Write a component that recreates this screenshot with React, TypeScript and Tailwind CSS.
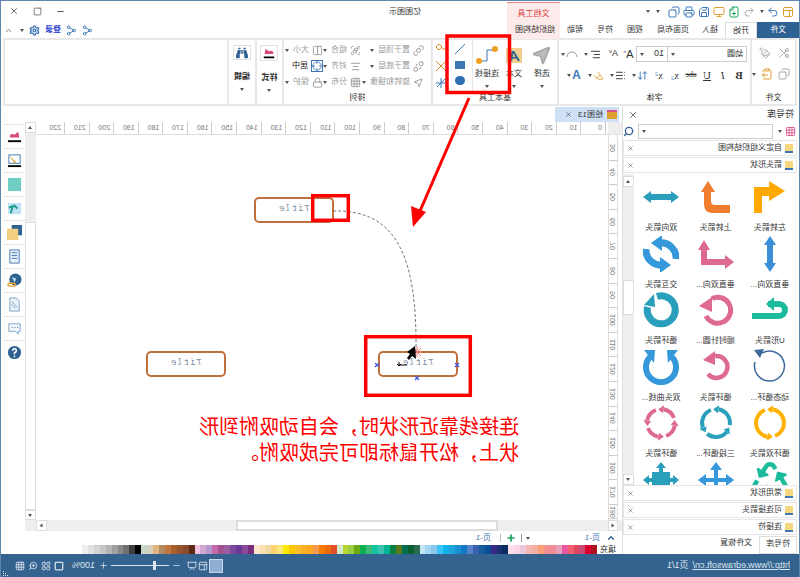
import {
  BringToFront, ChevronUp, ClipboardPaste, Columns2, Copy, Crosshair, FilePlus, Grid3x3, Group as GroupIcon, Layout, LayoutGrid, List, Lock, Minus,
  Monitor, MousePointer2, Paintbrush, Plus, Presentation, Printer, Redo2, Save, Scissors, Search, SendToBack, Settings, Share2, Square, Undo2, X, ZoomIn,
  AlignCenter, AlignLeft, ArrowUpDown, Highlighter,
} from "lucide-react";
import { FaBinoculars, FaRecycle } from "react-icons/fa";

const tabs = [
  { name: "插入", w: "w-[30px]" },
  { name: "页面布局", w: "w-[44px]" },
  { name: "视图", w: "w-[32px]" },
  { name: "符号", w: "w-[28px]" },
  { name: "帮助", w: "w-[32px]" },
  { name: "组织结构图", w: "w-[48px]" },
];

const palette = [
  "#eeeeee", "#e2e2e2", "#d4d4d4", "#c6c6c6", "#b4b4b4", "#a0a0a0", "#888888", "#707070", "#3f3f3f", "#000000",
  "#c9d6c9", "#d6cfc0", "#e0b47c", "#b58a60", "#c2763f", "#a9602f", "#96532c", "#8a4a2b", "#5c2a14",
  "#eec4df", "#d0a8d0", "#b49ad0", "#c56aa8", "#a2528e", "#9a5ea0", "#7c4a9a", "#6a3a9a", "#8a4a9a", "#7b2c7c",
  "#fde9cf", "#fddfb0", "#f0d6a0", "#fdd270", "#fde87a", "#fde800", "#fdc800", "#fdbe28", "#fbb028", "#fca81e", "#f99a50", "#f77c00", "#ec6a10", "#e2502a",
  "#cfe8c8", "#b8d430", "#9ccc44", "#6aaa14", "#0cb050", "#3abb7a", "#10c4a0", "#3cc0b0", "#00b294", "#0a8040", "#5a7a20", "#00704e", "#0a6030", "#2a6a50",
  "#c4e6f4", "#a2d8f4", "#8cc8ec", "#3cc4f8", "#10b4f0", "#1ca4d8", "#1890d0", "#1478c8", "#5a82c8", "#3c60b0", "#145c9c", "#0a4c98", "#3a2a88", "#1c3070", "#0c2c60",
  "#fde0e8", "#fcd4e8", "#ecc8e0", "#f4b8b0", "#f4b0a0", "#fca078", "#f49090", "#f08c98", "#e8a0b8", "#e858a0", "#ee6070", "#e04860", "#cc4878", "#d8002c", "#b01020",
];

// ring made of n arrow segments
const RingArrows = ({ n, color, r, sw }: { n: number; color: string; r: number; sw: number }) => {
  const gap = 0.55;
  const items = Array.from({ length: n }, (_, i) => {
    const a0 = (i * 2 * Math.PI) / n - 1.2;
    const a1 = a0 + (2 * Math.PI) / n - gap;
    const p = (a: number, rr: number) => `${(18 + rr * Math.cos(a)).toFixed(1)} ${(18 + rr * Math.sin(a)).toFixed(1)}`;
    return (
      <g key={i}>
        <path d={`M${p(a0, r)} A${r} ${r} 0 0 1 ${p(a1, r)}`} fill="none" stroke={color} strokeWidth={sw} />
        <polygon points={`${p(a1, r + sw)} ${p(a1, r - sw)} ${p(a1 + gap * 0.7, r)}`} fill={color} />
      </g>
    );
  });
  return <svg viewBox="0 0 36 36" className="w-9 h-9">{items}</svg>;
};

const Shape = ({ children, color }: { children: React.ReactNode; color: string }) => (
  <svg viewBox="0 0 36 36" className="w-9 h-9 -scale-x-100" fill={color}>{children}</svg>
);

const shapes = [
  { label: "左转箭头", icon: <Shape color="#ffa800"><polygon points="2,34 10,34 10,17 17,17 17,22 33,12 17,2 17,8 2,8" /></Shape> },
  { label: "上转箭头", icon: <Shape color="#f07c2e"><path d="M10 2 L17 13 H13 V22 Q13 26 17 26 H32 V34 H15 Q6 34 6 25 V13 H3 Z" /></Shape> },
  { label: "双向箭头", icon: <Shape color="#2a9fbc"><path d="M0 18 L8 12 V15 H28 V12 L36 18 L28 24 V21 H8 V24 Z" /></Shape> },
  { label: "垂直双向...", icon: <Shape color="#3a8fd6"><path d="M18 0 L24 9 H21 V27 H24 L18 36 L12 27 H15 V9 H12 Z" /></Shape> },
  { label: "垂直双向...", icon: <Shape color="#de6a8f"><path d="M6 4 L12 14 H9 V23 H27 V19 L36 26 L27 33 V29 H3 V14 H0 Z" /></Shape> },
  { label: "交互箭头", icon: <Shape color="#3498db"><path d="M33 23 A15 15 0 0 0 16 7" fill="none" stroke="#3498db" strokeWidth="7" /><polygon points="8,7 19,-1 19,15" /><path d="M3 13 A15 15 0 0 0 20 29" fill="none" stroke="#3498db" strokeWidth="7" /><polygon points="28,29 17,37 17,21" /></Shape> },
  { label: "U形箭头", icon: <Shape color="#1abc9c"><path d="M16 12 H27 A6 6 0 0 1 27 24 H0" fill="none" stroke="#1abc9c" strokeWidth="6" /><polygon points="14,12 22,5 22,19" /></Shape> },
  { label: "顺时针圆...", icon: <Shape color="#de6a8f"><path d="M14 6.5 A13 13 0 1 1 8 24" fill="none" stroke="#de6a8f" strokeWidth="5" /><polygon points="1,14 14,5 14,20" /></Shape> },
  { label: "循环箭头", icon: <Shape color="#2a9fbc"><path d="M14 4.5 A14 14 0 1 1 4.5 15" fill="none" stroke="#2a9fbc" strokeWidth="7" /><polygon points="1,13 11,2 12,15" /></Shape> },
  { label: "动态循环...", icon: <Shape color="#3e6a9a"><path d="M10 4 A15 15 0 1 1 3 13" fill="none" stroke="#3e6a9a" strokeWidth="1.5" /><polygon points="2,1 12,0 8,9" /></Shape> },
  { label: "循环箭头", icon: <Shape color="#de6a8f"><path d="M17 7 A11 11 0 1 1 10 25" fill="none" stroke="#de6a8f" strokeWidth="4.5" /><polygon points="5,11 17,2 17,16" /></Shape> },
  { label: "双头曲线...", icon: <Shape color="#3498db"><path d="M7 8 A15 15 0 1 0 29 8" fill="none" stroke="#3498db" strokeWidth="6" /><polygon points="1,1 12,1 11,14" /><polygon points="35,1 24,1 25,14" /></Shape> },
  { label: "循环双箭头", icon: <RingArrows n={2} color="#ffb000" r={14} sw={4} /> },
  { label: "三段循环...", icon: <RingArrows n={3} color="#2a9fbc" r={14} sw={4} /> },
  { label: "循环箭头", icon: <RingArrows n={4} color="#de6a8f" r={14} sw={4} /> },
  { label: "", icon: <FaRecycle className="w-9 h-9 text-[#1abc9c]" /> },
  { label: "", icon: <Shape color="#3498db"><path d="M18 0 L24 8 H20 V16 H28 V12 L36 18 L28 24 V20 H20 V28 H24 L18 36 L12 28 H16 V20 H8 V24 L0 18 L8 12 V16 H16 V8 H12 Z" /></Shape> },
  { label: "", icon: <Shape color="#2a9fbc"><path d="M18 0 L23 6 H20 V10 H27 V16 H30 V13 L36 18 L30 23 V20 H27 V36 H9 V20 H6 V23 L0 18 L6 13 V16 H9 V10 H16 V6 H13 Z" /></Shape> },
];

// small folder-ish marker on the stencil headers
const SectionHead = ({ title }: { title: string }) => (
  <div className="h-[16px] shrink-0 mb-px ml-[2px] flex items-center border border-[#e6e6e6] bg-white pl-[3px] pr-[3px] text-[8px] text-[#333]">
    <span className="w-[8px] h-[9px] mr-[3px] bg-[#f5d77f] border-b-2 border-[#3f77b5]" />
    <span className="flex-1 whitespace-nowrap">{title}</span>
    <X size={7} className="text-[#555]" />
  </div>
);

const Caret = ({ className = "" }: { className?: string }) => (
  <span className={`inline-block w-0 h-0 border-x-[2px] border-x-transparent border-t-[3px] border-t-[#555] ${className}`} />
);

const ArrangeItem = ({ icon, label, active }: { icon: React.ReactNode; label: string; active?: boolean }) => (
  <div className={`h-[16px] flex items-center gap-[3px] text-[8px] whitespace-nowrap ${active ? "text-[#222]" : "text-[#999]"}`}>
    <span className="w-[12px] flex justify-center">{icon}</span>
    {label}
    {!active && <Caret className="ml-[1px]" />}
  </div>
);

// big tool button of the basic tools group
const BigBtn = ({ icon, label, w }: { icon: React.ReactNode; label: string; w: string }) => (
  <div className={`${w} flex flex-col items-center text-[8px] text-[#333] pt-[3px]`}>
    <div className="h-[24px] flex items-center justify-center">{icon}</div>
    <span className="leading-[13px] whitespace-nowrap">{label}</span>
    <Caret className="mt-[5px]" />
  </div>
);

const BoxedBtn = ({ icon, label }: { icon: React.ReactNode; label: string }) => (
  <div className="w-full flex flex-col items-center text-[8px] font-bold text-[#333] pt-[5px]">
    <div className="w-[18px] h-[18px] border border-[#e0e0e0] flex items-center justify-center">{icon}</div>
    <span className="mt-[10px] leading-[13px]">{label}</span>
    <Caret className="mt-[5px]" />
  </div>
);

const Group = ({ w, label, children }: { w: string; label?: string; children: React.ReactNode }) => (
  <div className={`${w} shrink-0 flex flex-col border-r-2 border-[#e8e8e8]`}>
    <div className="flex-1 flex min-h-0">{children}</div>
    <div className="h-[13px] text-center text-[8px] leading-[13px] text-[#333]">{label}</div>
  </div>
);

const rulerH = Array.from({ length: 23 }, (_, i) => i * 10);
const rulerV = Array.from({ length: 16 }, (_, i) => 30 + i * 10);

const ToolIcon = ({ children }: { children: React.ReactNode }) => (
  <div className="h-[24px] border-t border-[#e4e4e4] flex items-center justify-center">
    <svg viewBox="0 0 16 16" className="w-[15px] h-[15px] -scale-x-100">{children}</svg>
  </div>
);

const titleBox = "absolute w-[80px] h-[26px] rounded-[5px] border-2 border-[#c0703c] flex items-center justify-center italic text-[9px] tracking-[1px] text-[#8090a0] font-['Liberation_Mono',monospace]";

export default function App() {
  return (
    <div className="relative w-[800px] h-[577px] overflow-hidden -scale-x-100 bg-white flex flex-col border-x border-t border-[#5f86ad] font-['Liberation_Sans','Noto_Sans_CJK_SC',sans-serif]">
      {/* contextual tab */}
      <div className="absolute left-[239px] top-[1px] w-[53px] h-[37px] bg-[#fdeaea] border-t border-[#f08a8a] text-center text-[8px] leading-[22px] text-[#d9413c]">文档工具</div>

      {/* title bar */}
      <div className="relative h-[21px] shrink-0 flex items-center text-[#3f77b5] pl-[5px]">
        <div className="flex items-center gap-[3px]">
          <Layout size={12} className="text-[#e0a030]" />
          <Redo2 size={12} />
          <Caret />
          <Undo2 size={12} className="ml-[2px] text-[#aaa]" />
          <FilePlus size={12} className="text-[#1aa35a]" />
          <Monitor size={12} className="text-[#e0a030]" />
          <Save size={12} />
          <Printer size={12} />
          <Copy size={12} />
          <Caret className="ml-[5px]" />
          <Caret className="ml-[3px]" />
        </div>
        <span className="absolute left-[378px] text-[8px] text-[#333]">亿图图示</span>
        <div className="absolute left-[734px] top-[5px] flex items-center gap-[14px] text-[#555]">
          <Minus size={9} strokeWidth={3} />
          <Square size={9} />
          <X size={10} />
        </div>
      </div>

      {/* tabs */}
      <div className="relative h-[16px] shrink-0 flex items-stretch text-[8px] text-[#333] leading-[15px] text-center">
        <div className="w-[42px] bg-[#2e6292] text-white">文件</div>
        <div className="w-[32px] border-x border-t border-[#dcdcdc] bg-white">开始</div>
        {tabs.map((t) => (
          <div key={t.name} className={`${t.w} whitespace-nowrap`}>{t.name}</div>
        ))}
        <div className="absolute left-[706px] top-0 h-[16px] flex items-center gap-[5px] text-[#3f77b5]">
          <Share2 size={11} />
          <Share2 size={11} />
          <span className="text-[8px] leading-[12px] font-bold text-[#2b3fd6] whitespace-nowrap">登录</span>
          <Settings size={11} strokeWidth={3} />
          <Caret />
          <ChevronUp size={9} className="ml-[2px] text-[#555]" />
        </div>
      </div>

      {/* ribbon */}
      <div className="h-[68px] shrink-0 mx-[2px] flex border-2 border-[#e8e8e8] bg-white">
        <Group w="w-[45px]" label="文件">
          <div className="flex flex-col gap-[9px] pl-[5px] pt-[7px] text-[#aaa]">
            <div className="flex gap-[7px]"><Scissors size={12} /><Paintbrush size={12} /></div>
            <div className="flex gap-[5px] items-center"><Copy size={12} /><ClipboardPaste size={12} className="text-[#e0a030]" /><Caret /></div>
          </div>
        </Group>
        <Group w="w-[193px]" label="字体">
          <div className="flex flex-col gap-[5px] pl-[3px] pt-[6px] text-[8px] text-[#333]">
            <div className="flex items-center h-[16px]">
              <div className="w-[80px] h-[16px] border border-[#ccc] px-[3px] flex items-center justify-between">幼圆<Caret /></div>
              <div className="w-[31px] h-[16px] border-y border-r border-[#ccc] px-[3px] flex items-center justify-between text-[9px]">10<Caret /></div>
              <span className="w-[15px] text-center text-[11px]">A<sup className="text-[6px]">^</sup></span>
              <span className="w-[15px] text-center text-[9px]">A<sup className="text-[6px]">v</sup></span>
              <span className="w-[26px] flex items-center justify-center gap-[2px]"><AlignLeft size={11} /><Caret /></span>
              <span className="w-[20px] flex items-center justify-center gap-[1px]">
                <svg viewBox="0 0 12 12" className="w-[12px] h-[12px]"><path d="M1 9 A5 5 0 0 1 11 9" fill="none" stroke="#999" /></svg>
                <Caret />
              </span>
            </div>
            <div className="flex items-center h-[16px] font-['Liberation_Serif','Noto_Sans_CJK_SC',serif]">
              <span className="w-[16px] text-center font-bold text-[11px]">B</span>
              <span className="w-[16px] text-center italic text-[11px]">I</span>
              <span className="w-[16px] text-center underline text-[11px]">U</span>
              <span className="w-[16px] text-center line-through text-[8px]">abc</span>
              <span className="w-[16px] text-center text-[10px]">x<sub className="text-[6px] text-[#3f77b5]">2</sub></span>
              <span className="w-[16px] text-center text-[10px]">x<sup className="text-[6px] text-[#3f77b5]">2</sup></span>
              <span className="w-[22px] flex items-center justify-center gap-[1px]"><ArrowUpDown size={11} className="text-[#3f77b5]" /><Caret /></span>
              <span className="w-[22px] flex items-center justify-center gap-[1px]"><List size={11} /><Caret /></span>
              <span className="w-[22px] flex items-center justify-center gap-[1px]"><Highlighter size={11} className="text-[#e0a030]" /><Caret /></span>
              <span className="w-[22px] flex items-center justify-center gap-[1px] text-[12px] font-bold text-[#3f77b5] font-['Liberation_Sans']">A<Caret /></span>
            </div>
          </div>
        </Group>
        <Group w="w-[126px]" label="基本工具">
          <BigBtn w="w-[30px]" label="选择" icon={<MousePointer2 size={22} className="text-[#aaa] fill-[#bbb]" />} />
          <BigBtn w="w-[26px]" label="文本" icon={
            <div className="w-[16px] h-[15px] bg-[#f2cf8e] text-[#2e6292] font-bold text-[15px] leading-[15px] text-center italic">A</div>
          } />
          <div className="border-r border-[#e8e8e8]">
            <BigBtn w="w-[28px]" label="连接线" icon={
              <svg viewBox="0 0 24 22" className="w-[24px] h-[22px]"><path d="M5 6 H12 V17 H19" fill="none" stroke="#3f77b5" /><circle cx="4" cy="5" r="3" fill="#f0a020" /><circle cx="20" cy="17" r="3" fill="#f0a020" /></svg>
            } />
          </div>
          <div className="flex flex-col items-center w-[24px] gap-[5px] pt-[3px]">
            <svg viewBox="0 0 12 12" className="w-[12px] h-[12px]"><path d="M1 1 L11 11" stroke="#3f77b5" /></svg>
            <div className="w-[10px] h-[8px] mt-[1px] bg-[#3f77b5]" />
            <div className="w-[10px] h-[9px] mt-[2px] rounded-full bg-[#2f6fb0]" />
          </div>
          <div className="flex flex-col items-center w-[14px] gap-[5px] pt-[3px]">
            <svg viewBox="0 0 12 12" className="w-[12px] h-[12px]"><path d="M1 6 H5 M8 1 L11 4 L8 7 L5 4 Z" fill="none" stroke="#e08a20" /></svg>
            <svg viewBox="0 0 12 12" className="w-[12px] h-[12px]"><path d="M1 1 L11 11 M11 1 L1 11" fill="none" stroke="#e08a20" /></svg>
            <svg viewBox="0 0 12 12" className="w-[12px] h-[12px]"><path d="M6 1 V11 M1 6 H11 M2 2 L10 10" fill="none" stroke="#3f77b5" /></svg>
          </div>
        </Group>
        <Group w="w-[149px]" label="排列">
          <div className="flex pl-[6px] pt-[2px]">
            <div className="w-[63px] flex flex-col">
              <ArrangeItem icon={<BringToFront size={11} />} label="置于顶层" />
              <ArrangeItem icon={<SendToBack size={11} />} label="置于底层" />
              <ArrangeItem icon={<MousePointer2 size={11} />} label="旋转和镜像" />
            </div>
            <div className="w-[39px] flex flex-col">
              <ArrangeItem icon={<GroupIcon size={11} />} label="组合" />
              <ArrangeItem icon={<AlignCenter size={11} />} label="对齐" />
              <ArrangeItem icon={<Grid3x3 size={11} />} label="分布" />
            </div>
            <div className="w-[36px] flex flex-col">
              <ArrangeItem icon={<Columns2 size={11} />} label="大小" />
              <ArrangeItem active icon={<span className="border border-[#3f77b5] flex"><Crosshair size={10} className="text-[#3f77b5]" /></span>} label="居中" />
              <ArrangeItem icon={<Lock size={11} />} label="保护" />
            </div>
          </div>
        </Group>
        <Group w="w-[27px]">
          <BoxedBtn label="样式" icon={
            <svg viewBox="0 0 16 16" className="w-[14px] h-[14px]"><path d="M3 9 Q3 4 8 6 L12 3 L13 9 Z" fill="#d94a7a" /><rect x="2" y="12" width="12" height="2" /></svg>
          } />
        </Group>
        <Group w="w-[28px]">
          <BoxedBtn label="编辑" icon={<FaBinoculars size={12} className="text-[#2e6292]" />} />
        </Group>
      </div>

      {/* main */}
      <div className="flex-1 min-h-0 flex">
        {/* stencil panel */}
        <div className="w-[177px] shrink-0 flex flex-col border-r border-[#e0e0e0]">
          <div className="h-[17px] shrink-0 flex items-center justify-between pl-[5px] pr-[3px] text-[9px] text-[#333]">
            符号库
            <X size={10} className="mr-[2px] text-[#555]" />
          </div>
          <div className="h-[17px] shrink-0 flex items-center pl-[3px]">
            <Grid3x3 size={11} className="text-[#d9518a]" />
            <Caret className="ml-[3px]" />
            <div className="ml-[5px] w-[137px] h-[15px] border border-[#ccc] flex items-center justify-end pr-[3px]"><Caret /></div>
            <Search size={11} className="ml-[4px] text-[#2e6292]" strokeWidth={3} />
          </div>
          <SectionHead title="自定义组织结构图" />
          <SectionHead title="箭头形状" />
          <div className="h-[311px] shrink-0 flex overflow-hidden">
            <div className="w-[165px] grid grid-cols-3 pl-[2px] auto-rows-[56.5px]">
              {shapes.map((s, i) => (
                <div key={i} className="flex flex-col items-center pt-[5px]">
                  <div className="h-[36px] flex items-center">{s.icon}</div>
                  <span className="mt-[7px] text-[8px] leading-[12px] text-[#333] whitespace-nowrap">{s.label}</span>
                </div>
              ))}
            </div>
            <div className="w-[11px] flex flex-col bg-[#eeeeee]">
              <div className="h-[11px] mt-[2px] bg-white border border-[#ddd] flex items-center justify-center"><Caret className="rotate-180" /></div>
              <div className="h-[93px]" />
              <div className="h-[35px] bg-white border border-[#ddd]" />
              <div className="flex-1" />
              <div className="h-[11px] bg-white border border-[#ddd] flex items-center justify-center"><Caret /></div>
            </div>
          </div>
          <SectionHead title="常用形状" />
          <SectionHead title="可连接箭头" />
          <SectionHead title="连接符" />
          <div className="flex-1 flex pl-[2px] text-[8px] text-[#333] text-center leading-[14px] whitespace-nowrap">
            <div className="w-[38px] border border-[#ddd] bg-white">符号库</div>
            <div className="ml-[4px] w-[38px]">文件恢复</div>
          </div>
        </div>

        {/* document area */}
        <div className="flex-1 min-w-0 flex flex-col">
          <div className="h-[16px] shrink-0 flex items-end">
            <div className="ml-[3px] w-[64px] h-[15px] bg-[#cfe0f5] flex items-center justify-between pl-[2px] pr-[10px] text-[8px] text-[#333]">
              <span className="flex items-center gap-[4px]"><span className="w-[10px] h-[9px] bg-[#e0a030] border-t-2 border-[#d9518a]" />绘图13</span>
              <X size={7} />
            </div>
          </div>
          <div className="flex-1 min-h-0 grid grid-cols-[14px_1fr_11px] grid-rows-[13px_1fr_11px]">
            <div className="bg-[#eeeeee] border-b border-[#e0e0e0]" />
            <div className="relative overflow-hidden flex bg-white border-b border-[#ddd] pl-[2px] text-[7px] leading-[11px] text-[#777]">
              {rulerH.map((n) => (
                <div key={n} className="w-[24.6px] shrink-0 border-l border-[#ccc] pl-[3px]">{n}</div>
              ))}
            </div>
            <div className="row-span-2 flex flex-col bg-[#eeeeee]">
              <div className="h-[11px] bg-white border border-[#ddd] flex items-center justify-center"><Caret className="rotate-180" /></div>
              <div className="h-[89px]" />
              <div className="flex-1 bg-white border border-[#ddd]" />
              <div className="h-[10px] bg-white border border-[#ddd] flex items-center justify-center"><Caret /></div>
            </div>
            <div className="overflow-hidden ml-[4px] w-[10px] border-x border-[#ddd] flex flex-col pt-[1px] text-[7px] text-[#777]">
              {rulerV.map((n) => (
                <div key={n} className="h-[24.6px] last:h-[14px] shrink-0 border-b border-[#ccc] flex items-center justify-center [writing-mode:vertical-rl]">{n}</div>
              ))}
            </div>
            <div className="relative bg-white overflow-hidden">
              <div className={`${titleBox} left-[274px] top-[62px]`}>Title</div>
              <div className={`${titleBox} left-[382px] top-[216px]`}>Title</div>
              <div className={`${titleBox} left-[150px] top-[216px]`}>Title</div>
              <div className="absolute left-[89px] top-[279px] text-[20px] leading-[26px] text-[#ff0000] whitespace-nowrap">
                连接线靠近形状时，会自动吸附到形<br />状上，松开鼠标即可完成吸附。
              </div>
            </div>
            <div className="col-span-3 bg-[#eeeeee] flex pl-[4px]">
              <div className="w-[10px] bg-white border border-[#ddd] flex items-center justify-center"><Caret className="rotate-90" /></div>
              <div className="ml-[110px] w-[262px] bg-white border-2 border-[#ddd]" />
              <div className="ml-[189px] w-[11px] bg-white border border-[#ddd] flex items-center justify-center"><Caret className="-rotate-90" /></div>
            </div>
          </div>
          <div className="h-[14px] shrink-0 flex items-center text-[8px]">
            <ChevronUp size={10} className="ml-[6px] text-[#2e6292]" strokeWidth={3} />
            <span className="ml-[6px] w-[14px] text-[#3f77b5] whitespace-nowrap">页-1</span>
            <Caret className="ml-[56px]" />
            <span className="ml-[4px] w-px h-[8px] bg-[#999]" />
            <Plus size={10} strokeWidth={4} className="ml-[5px] text-[#1aa35a]" />
            <span className="ml-[5px] w-px h-[8px] bg-[#bbb]" />
            <span className="ml-[9px] w-[14px] text-[#3f77b5] whitespace-nowrap">页-1</span>
          </div>
          <div className="h-[9px] shrink-0 flex items-center">
            <span className="w-[22px] text-[8px] leading-[9px] text-right text-[#333] whitespace-nowrap">填充</span>
            <div className="w-[518px] h-[9px] flex flex-row-reverse">
              {palette.map((c, i) => (
                <div key={i} className="w-[5.93px] h-[9px] shrink-0" style={{ backgroundColor: c }} />
              ))}
            </div>
          </div>
        </div>

        {/* side toolbar */}
        <div className="w-[24px] shrink-0 flex flex-col pt-[18px] pr-[3px]">
          <ToolIcon><path d="M3 9 Q3 4 8 6 L12 3 L13 9 Z" fill="#d94a7a" /><rect x="1" y="12" width="14" height="2" /></ToolIcon>
          <ToolIcon><rect x="2" y="2" width="12" height="9" fill="none" stroke="#3f77b5" /><path d="M2 2 L10 10 L8 11 Z" fill="#e0a030" /><rect x="1" y="13" width="14" height="2" /></ToolIcon>
          <ToolIcon><rect x="1" y="1" width="14" height="14" fill="#6fcdc4" /></ToolIcon>
          <ToolIcon><rect x="1" y="2" width="14" height="12" fill="#bfe3f5" /><path d="M4 13 L6 6 M2 7 L8 5 L11 8" stroke="#1a9c8a" strokeWidth="2" fill="none" /></ToolIcon>
          <ToolIcon><rect x="5" y="0" width="11" height="11" fill="#2e6292" /><rect x="0" y="4" width="12" height="12" fill="#f2cf7e" /></ToolIcon>
          <ToolIcon><path d="M3 1 H13 V15 H3 Z" fill="#e8f0f8" stroke="#3f77b5" /><path d="M5 4 H11 M5 7 H11 M5 10 H11" stroke="#3f77b5" /></ToolIcon>
          <ToolIcon><circle cx="9" cy="7" r="6.5" fill="#2e6292" /><path d="M5 4 L10 6 L8 10 Z" fill="#bcd6ee" /><rect x="1" y="11" width="8" height="3" rx="1.5" fill="none" stroke="#e0a030" strokeWidth="1.5" /></ToolIcon>
          <ToolIcon><path d="M3 1 H10 L13 4 V15 H3 Z" fill="#e8f0f8" stroke="#7ba3c9" /><path d="M5 5 L11 11 M5 8 L9 12" stroke="#7ba3c9" /></ToolIcon>
          <ToolIcon><path d="M2 3 H14 V11 H12 V14 L9 11 H2 Z" fill="#f4f8fc" stroke="#7ba3c9" /><path d="M5 7 H6 M8 7 H9 M11 7 H12" stroke="#2e6292" /></ToolIcon>
          <ToolIcon><circle cx="8" cy="8" r="7" fill="#2e6292" /><path d="M6 6 Q6 4 8 4 Q10 4 10 6 Q10 7.5 8 8 V10 M8 11.5 V13" stroke="#fff" strokeWidth="1.6" fill="none" /></ToolIcon>
        </div>
      </div>

      {/* status bar */}
      <div className="relative h-[23px] shrink-0 bg-[#35638f] flex items-center justify-between text-[9px] text-[#dce6f0]">
        <div className="flex items-center pl-[9px] gap-[4px]">
          <span className="underline whitespace-nowrap">http://www.edrawsoft.cn/</span>
          <span>页1/1</span>
        </div>
        <div className="flex items-center pr-[14px]">
          <div className="w-[14px] h-[14px] bg-[#8fb0d0] border border-[#c6d6e6] mr-[1px]" />
          <Layout size={10} className="mr-[1px]" />
          <Presentation size={10} className="mr-[6px]" />
          <Minus size={9} className="mr-[3px]" />
          <div className="relative w-[58px] h-px bg-[#dce6f0]">
            <div className="absolute left-[13px] -top-[4px] w-[3px] h-[9px] bg-[#dce6f0]" />
          </div>
          <Plus size={9} className="ml-[3px] mr-[4px]" />
          <span className="w-[20px]">100%</span>
          <Caret className="ml-[3px] mr-[4px]" />
          <Square size={10} strokeWidth={3} className="mr-[3px]" />
          <LayoutGrid size={10} className="mr-[3px]" />
          <ZoomIn size={10} className="mr-[3px]" />
          <Grid3x3 size={10} />
        </div>
        <div className="absolute right-[2px] bottom-[1px] grid grid-cols-3 gap-px">
          <span className="w-px h-px" /><span className="w-px h-px" /><span className="w-px h-px bg-[#dce6f0]" />
          <span className="w-px h-px" /><span className="w-px h-px bg-[#dce6f0]" /><span className="w-px h-px bg-[#dce6f0]" />
          <span className="w-px h-px bg-[#dce6f0]" /><span className="w-px h-px bg-[#dce6f0]" /><span className="w-px h-px bg-[#dce6f0]" />
        </div>
      </div>

      {/* callouts drawn on top of the app, in picture coordinates */}
      <svg viewBox="0 0 800 577" className="absolute inset-0 w-[800px] h-[577px] -scale-x-100 pointer-events-none">
        <path d="M334 210 C400 208 418 260 417 350" fill="none" stroke="#777" strokeDasharray="3 2" />
        <rect x="448" y="35" width="62.5" height="56.5" fill="none" stroke="#ff0000" strokeWidth="3.5" />
        <rect x="313.7" y="194.7" width="35.6" height="24.6" fill="none" stroke="#ff0000" strokeWidth="3.5" />
        <rect x="366.7" y="335.7" width="104.6" height="58.6" fill="none" stroke="#ff0000" strokeWidth="3.5" />
        <path d="M470 97 L421 210" stroke="#ff0000" strokeWidth="3" />
        <polygon points="414,226 412,205 427,211" fill="#ff0000" />
        <path d="M376 362 L380 366 M380 362 L376 366 M456 362 L460 366 M460 362 L456 366 M416 375 L420 379 M420 375 L416 379" stroke="#4a5ad6" strokeWidth="1.3" />
        <path d="M413 351 H423 M418 346 V356 M414 347 L422 355 M422 347 L414 355" stroke="#f08080" />
        <polygon points="416,345 417,358 413,355 410,359 408,357 411,353 408,351" fill="#000" />
        <path d="M400 361 V364 H408 M398 363 L400 365 L402 363" fill="none" stroke="#000" />
      </svg>
    </div>
  );
}
